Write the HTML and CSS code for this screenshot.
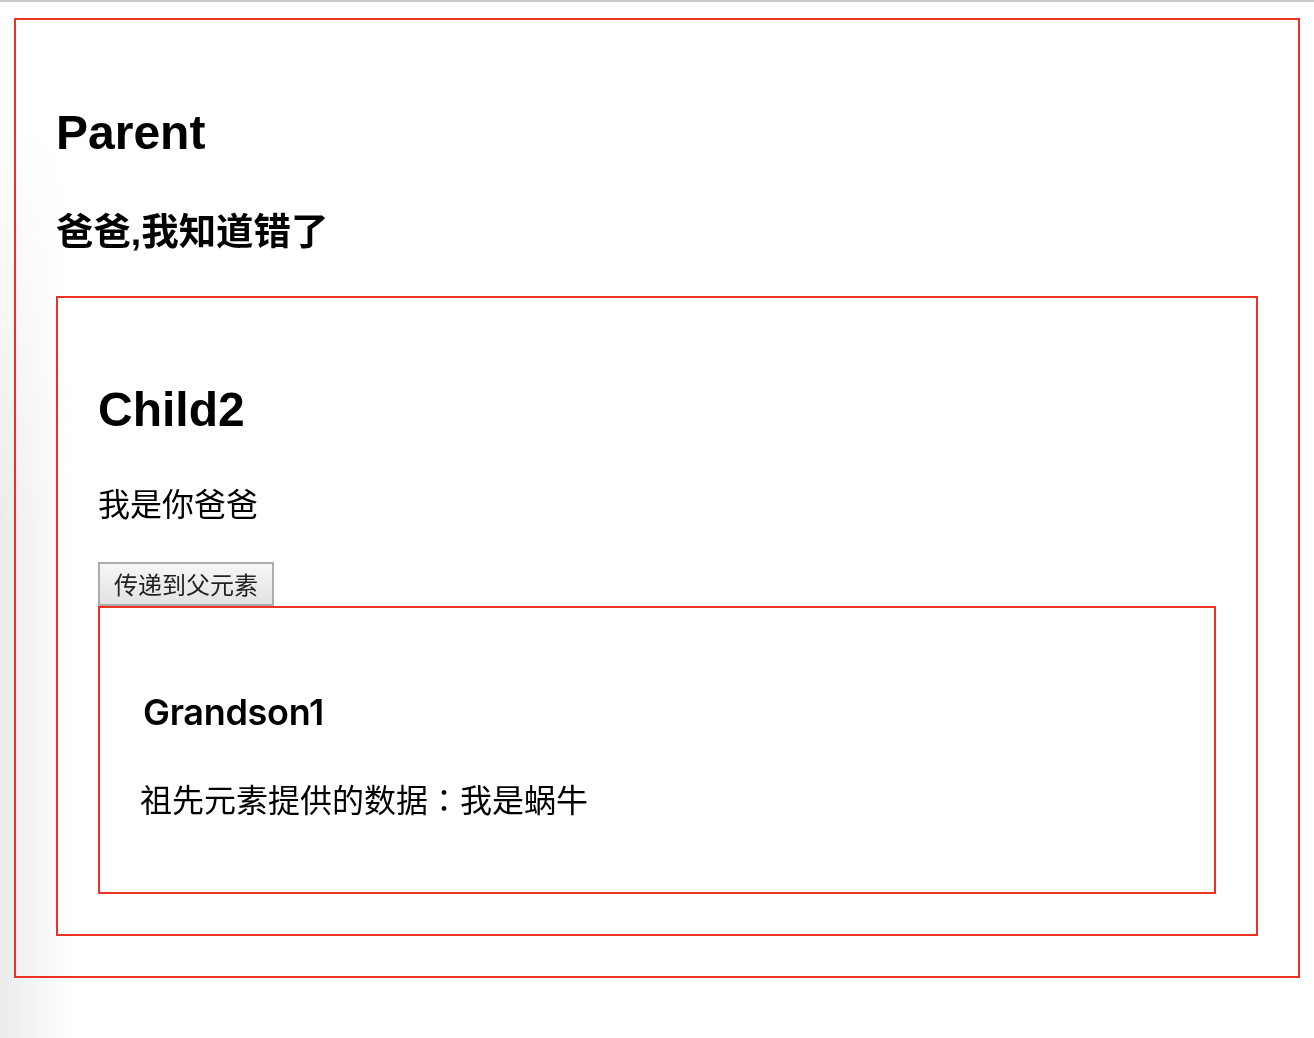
FILE: index.html
```html
<!DOCTYPE html>
<html lang="zh-CN">
<head>
<meta charset="utf-8">
<title>Parent</title>
<link rel="stylesheet" href="styles.css">
</head>
<body>
<div class="box parent">
  <h2 class="title">Parent</h2>
  <h3 class="msg">爸爸,我知道错了</h3>
  <div class="box child">
    <h2 class="title child-title">Child2</h2>
    <p class="text child-text">我是你爸爸</p>
    <button class="btn" type="button">传递到父元素</button>
    <div class="box grandson">
      <h3 class="gs-title">Grandson1</h3>
      <p class="gs-text">祖先元素提供的数据<span class="colon" lang="zh-Hant">：</span>我是蜗牛</p>
    </div>
  </div>
</div>
</body>
</html>
```

FILE: styles.css
```css
html, body {
  background: #ffffff;
}

body {
  margin: 0;
  border-top: 2px solid #c8c8c8;
  min-height: 1036px;
  position: relative;
  font-family: "Liberation Sans", "Noto Sans CJK SC", sans-serif;
  color: #000;
}

body::before {
  content: "";
  position: fixed;
  left: 0;
  top: 0;
  width: 70px;
  height: 100%;
  background: linear-gradient(to right, #ebebeb, rgba(255,255,255,0));
  -webkit-mask-image: linear-gradient(to bottom, transparent 120px, #000 520px);
  mask-image: linear-gradient(to bottom, transparent 120px, #000 520px);
  z-index: 0;
  pointer-events: none;
}

.box {
  border: 2px solid #eb3323;
  padding: 40px;
  position: relative;
  z-index: 1;
}

.parent {
  margin: 16px 14px 0 14px;
}

.title {
  font-family: "Liberation Sans", "Noto Sans CJK SC", sans-serif;
  font-size: 48px;
  font-weight: 700;
  line-height: 56px;
  margin: 45px 0 0;
}

.msg {
  font-family: "Liberation Sans", "Noto Sans CJK SC", sans-serif;
  font-size: 37.44px;
  font-weight: 700;
  line-height: 44px;
  margin: 49px 0 42px;
}

.child-title {
  margin-top: 44px;
}

.child-text {
  font-size: 32px;
  line-height: 38px;
  margin: 48px 0 0;
}

.btn {
  display: block;
  box-sizing: border-box;
  width: 176px;
  height: 44px;
  margin: 38px 0 0;
  padding: 0;
  border: 2px solid #acacac;
  border-radius: 0;
  background: linear-gradient(to bottom, #f6f6f6, #e3e3e3);
  font-family: "Noto Sans CJK SC", sans-serif;
  font-size: 24px;
  line-height: 38px;
  color: #222;
  text-align: center;
}

.grandson {
  margin: 0;
}

.gs-title {
  font-family: Inter, "Noto Sans CJK SC", sans-serif;
  font-size: 36px;
  font-weight: 600;
  letter-spacing: -0.3px;
  line-height: 44px;
  margin: 42px 0 0;
  padding-left: 3px;
}

.gs-text {
  font-family: Inter, "Noto Sans CJK SC", sans-serif;
  font-size: 32px;
  line-height: 38px;
  margin: 48px 0 32px;
}

.colon {
  font-family: "Noto Sans CJK TC", sans-serif;
  line-height: 1;
}
```
